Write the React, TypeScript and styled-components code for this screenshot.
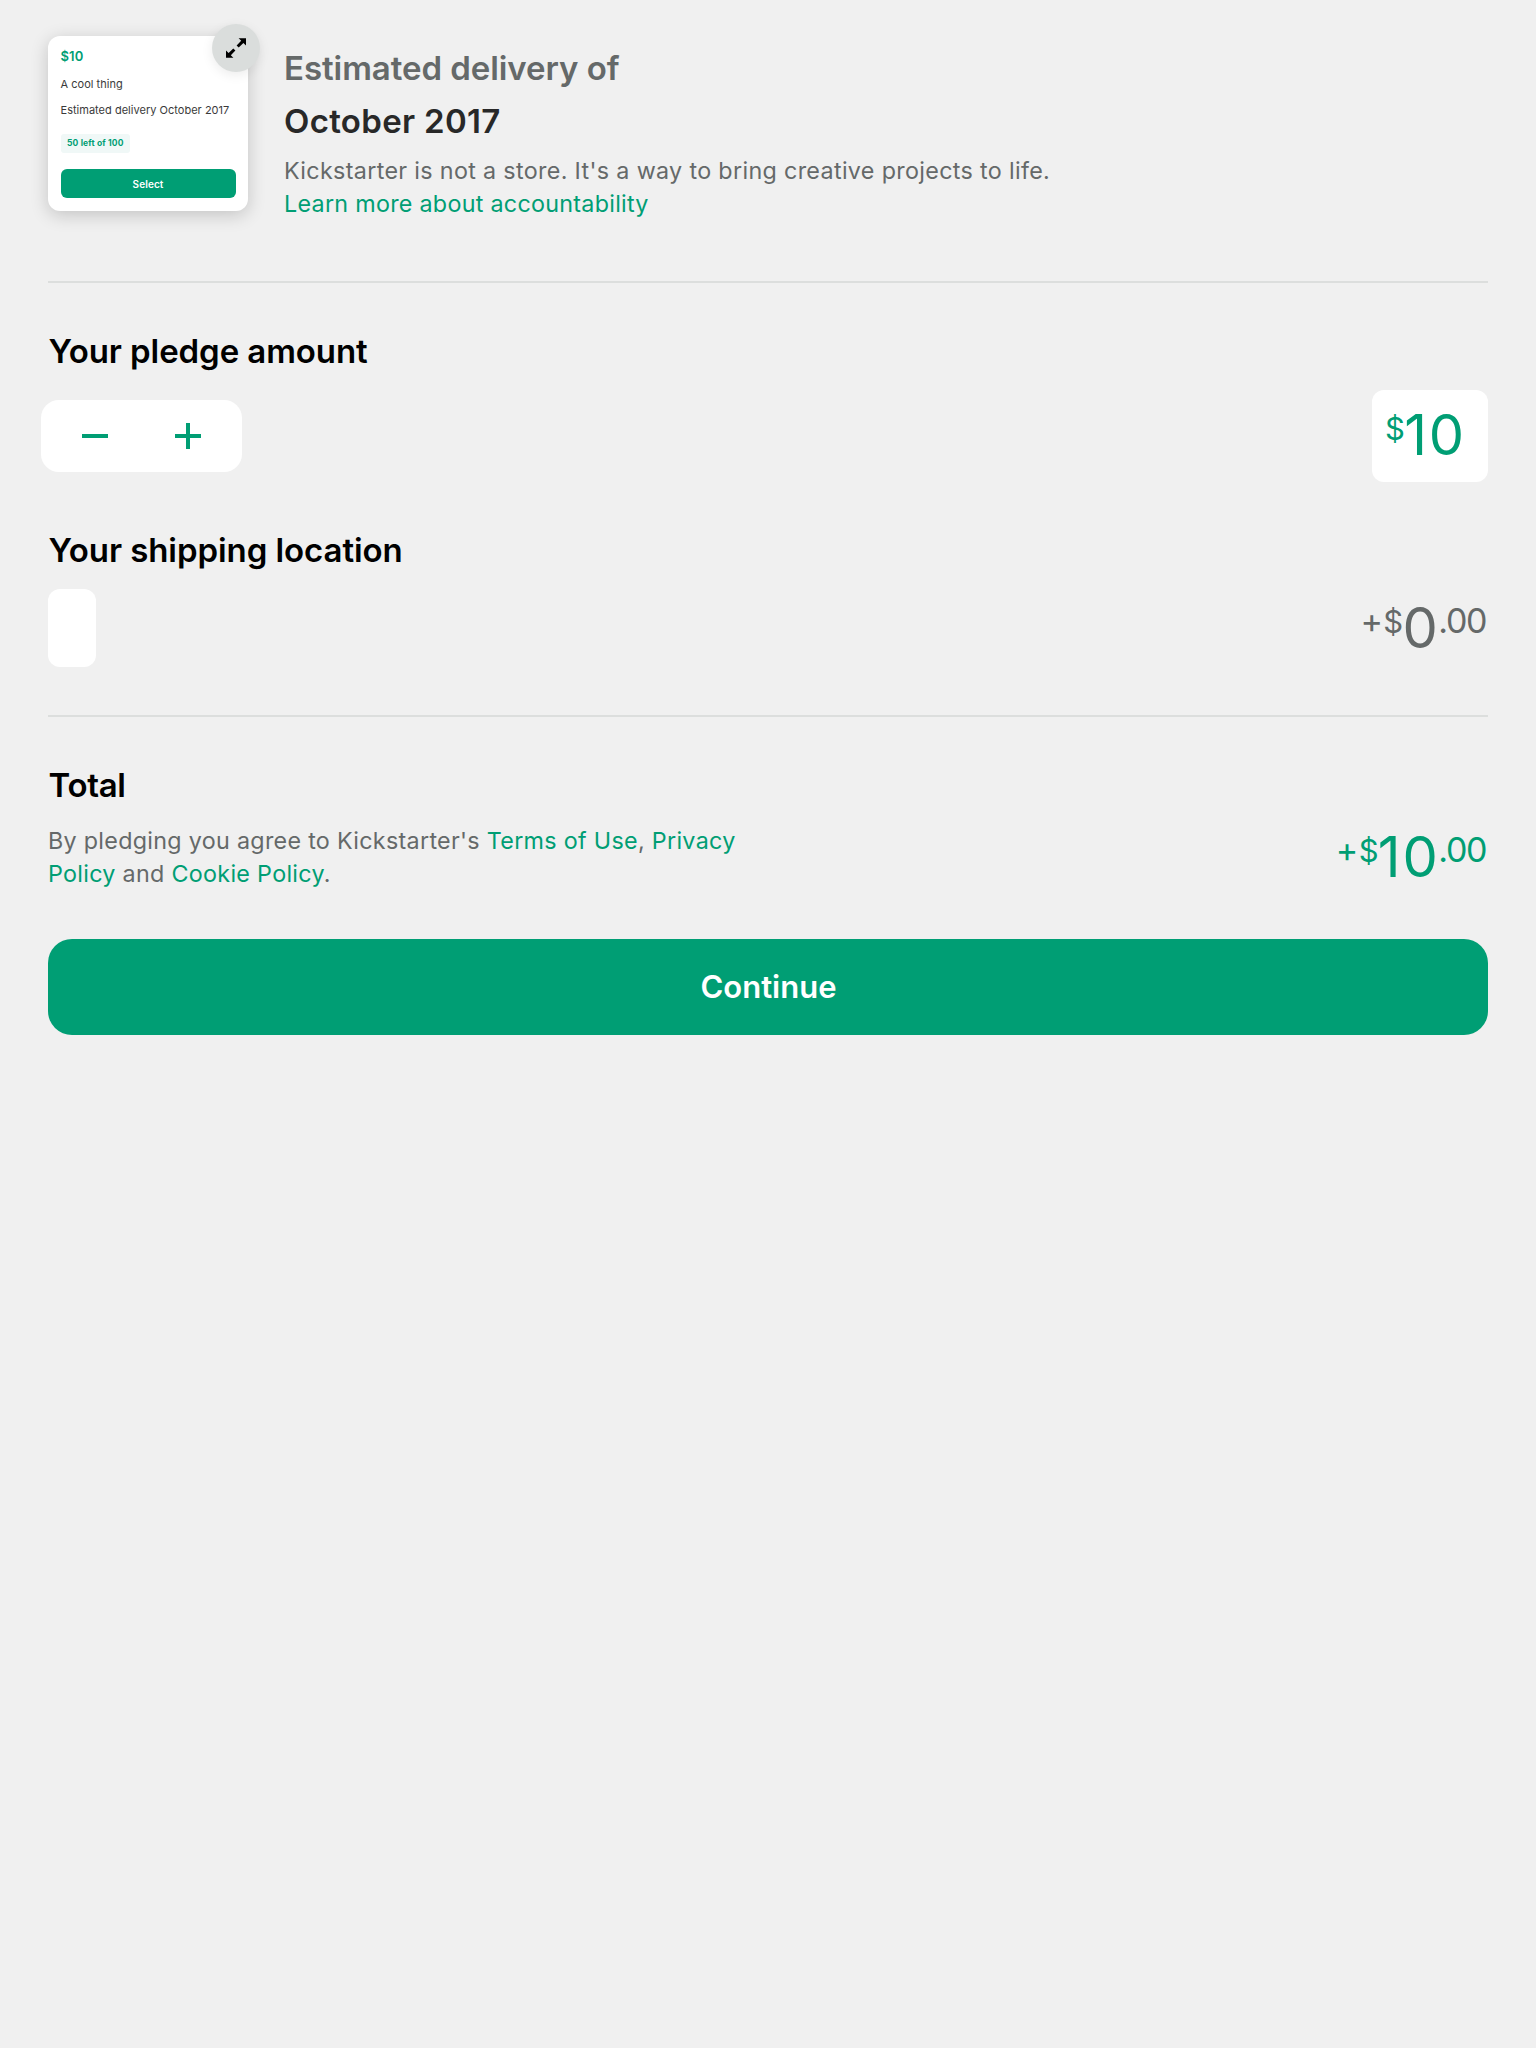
import React from "react";
import styled, { createGlobalStyle } from "styled-components";

const green = "#009e74";
const grey = "#656969";
const soot = "#282828";

const GlobalStyle = createGlobalStyle`
  *, *::before, *::after { box-sizing: border-box; }
  body {
    margin: 0;
    background: #f0f0f0;
    font-family: Inter, "Liberation Sans", sans-serif;
  }
  button { font-family: inherit; border: 0; padding: 0; cursor: pointer; }
`;

const Page = styled.main`
  min-height: 100vh;
  padding: 36px 48px;
  display: flex;
  flex-direction: column;
  background: #f0f0f0;
`;

const Header = styled.header`
  display: flex;
  align-items: flex-start;
  gap: 36px;
  height: 184px;
`;

const RewardCard = styled.article`
  position: relative;
  display: flex;
  flex-direction: column;
  align-items: flex-start;
  width: 200px;
  height: 175px;
  padding: 12px 12.5px 13px;
  border-radius: 12px;
  background: #fff;
  box-shadow: 0 4px 18px rgba(0, 0, 0, 0.19);
  white-space: nowrap;
`;

const RewardPrice = styled.strong`
  font-size: 13px;
  line-height: 16px;
  font-weight: 600;
  letter-spacing: 0.1px;
  color: ${green};
`;

const RewardText = styled.p<{ $gap: number }>`
  margin: ${({ $gap }) => $gap}px 0 0;
  font-size: 11px;
  line-height: 14px;
  letter-spacing: 0.02px;
  color: #3a3a3a;
`;

const RewardBadge = styled.span`
  margin-top: 17px;
  height: 19px;
  padding: 0 6.5px;
  border-radius: 3px;
  background: #f0f8f7;
  color: ${green};
  font-size: 8.5px;
  line-height: 19px;
  font-weight: 700;
  letter-spacing: 0.15px;
`;

const RewardButton = styled.button`
  align-self: stretch;
  height: 29px;
  margin-top: auto;
  border-radius: 6px;
  background: ${green};
  color: #fff;
  font-size: 10px;
  font-weight: 600;
  letter-spacing: 0.1px;
`;

const ExpandButton = styled.button`
  position: absolute;
  top: -12px;
  right: -12px;
  display: grid;
  place-items: center;
  width: 48px;
  height: 48px;
  border-radius: 50%;
  background: #dadddc;
  color: #000;
  box-shadow: 0 3px 12px rgba(0, 0, 0, 0.08);
`;

const Delivery = styled.div`
  padding-top: 6px;
`;

const DeliveryLine = styled.div<{ $color: string; $track: number }>`
  font-size: 33px;
  line-height: 53px;
  font-weight: 600;
  letter-spacing: ${({ $track }) => $track}px;
  color: ${({ $color }) => $color};
`;

const Copy = styled.p<{ $gap: number; $track: number }>`
  margin: ${({ $gap }) => $gap}px 0 0;
  font-size: 23.3px;
  line-height: 33px;
  letter-spacing: ${({ $track }) => $track}px;
  color: ${grey};
  white-space: nowrap;
`;

const Link = styled.a<{ $track?: number }>`
  color: ${green};
  text-decoration: none;
  letter-spacing: ${({ $track }) => ($track === undefined ? "inherit" : `${$track}px`)};
`;

const Divider = styled.hr<{ $gap: number }>`
  width: 100%;
  height: 2px;
  margin: ${({ $gap }) => $gap}px 0 0;
  border: 0;
  background: #dcdedd;
`;

const Section = styled.section`
  padding-top: 47px;
`;

const Title = styled.h2<{ $track: number }>`
  margin: 0;
  padding-left: 0.5px;
  font-size: 33px;
  line-height: 42px;
  font-weight: 600;
  letter-spacing: ${({ $track }) => $track}px;
  color: #000;
`;

const Row = styled.div<{ $height: number }>`
  display: flex;
  align-items: center;
  justify-content: space-between;
  height: ${({ $height }) => $height}px;
  margin-top: 18px;
`;

const Stepper = styled.div`
  display: flex;
  align-items: center;
  width: 201px;
  height: 72px;
  margin-left: -7px;
  padding: 0 8px 0 7px;
  border-radius: 18px;
  background: #fff;
`;

const StepButton = styled.button`
  display: grid;
  place-items: center;
  flex: 1;
  height: 100%;
  background: none;
  color: ${green};
`;

const CountryField = styled.div`
  width: 48px;
  height: 78px;
  border-radius: 12px;
  background: #fff;
`;

const Money = styled.div<{ $color: string }>`
  padding-right: 2px;
  font-size: 56px;
  line-height: 56px;
  letter-spacing: 1.8px;
  white-space: nowrap;
  color: ${({ $color }) => $color};
`;

const Plus = styled.span`
  font-size: 34px;
  line-height: 34px;
  letter-spacing: 0.3px;
  vertical-align: 15px;
`;

const Currency = styled.span`
  margin-right: -0.7px;
  font-size: 31px;
  line-height: 31px;
  letter-spacing: 0;
  vertical-align: 15.5px;
`;

const Cents = styled.span`
  margin-left: -1.2px;
  font-size: 34px;
  line-height: 34px;
  letter-spacing: -1.4px;
  vertical-align: 15px;
`;

const AmountField = styled.div`
  width: 116px;
  height: 92px;
  padding: 17px 0 0 13px;
  border-radius: 12px;
  background: #fff;
`;

const ContinueButton = styled.button`
  height: 96px;
  margin-top: 49px;
  padding-left: 1px;
  border-radius: 24px;
  background: ${green};
  color: #fff;
  font-size: 31px;
  line-height: 38px;
  font-weight: 600;
`;

const ExpandIcon = () => (
  <svg width="20" height="20" viewBox="0 0 20 20" fill="currentColor">
    <path d="M12.6 0.2H20V7.6L17.4 5L12.7 9.5L10.6 7.4L15.2 2.8Z" />
    <path d="M7.4 19.8H0V12.4L2.6 15L7.3 10.5L9.4 12.6L4.8 17.2Z" />
  </svg>
);

const MinusIcon = () => (
  <svg width="28" height="28" viewBox="0 0 28 28" stroke="currentColor" strokeWidth="4">
    <path d="M1 14H27" />
  </svg>
);

const PlusIcon = () => (
  <svg width="28" height="28" viewBox="0 0 28 28" stroke="currentColor" strokeWidth="4">
    <path d="M1 14H27M14 1V27" />
  </svg>
);

export default function App() {
  return (
    <>
      <GlobalStyle />
      <Page>
        <Header>
          <RewardCard>
            <RewardPrice>$10</RewardPrice>
            <RewardText $gap={13}>A cool thing</RewardText>
            <RewardText $gap={12}>Estimated delivery October 2017</RewardText>
            <RewardBadge>50 left of 100</RewardBadge>
            <RewardButton>Select</RewardButton>
            <ExpandButton aria-label="Expand reward">
              <ExpandIcon />
            </ExpandButton>
          </RewardCard>
          <Delivery>
            <DeliveryLine $color={grey} $track={-0.06}>Estimated delivery of</DeliveryLine>
            <DeliveryLine $color={soot} $track={0.32}>October 2017</DeliveryLine>
            <Copy $gap={6} $track={0.335}>
              Kickstarter is not a store. It's a way to bring creative projects to life.
              <br />
              <Link $track={0.28}>Learn more about accountability</Link>
            </Copy>
          </Delivery>
        </Header>

        <Divider $gap={61} />

        <Section>
          <Title $track={-0.08}>Your pledge amount</Title>
          <Row $height={92}>
            <Stepper>
              <StepButton aria-label="Decrease pledge"><MinusIcon /></StepButton>
              <StepButton aria-label="Increase pledge"><PlusIcon /></StepButton>
            </Stepper>
            <AmountField>
              <Money $color={green}><Currency>$</Currency>10</Money>
            </AmountField>
          </Row>
        </Section>

        <Section>
          <Title $track={-0.07}>Your shipping location</Title>
          <Row $height={78}>
            <CountryField />
            <Money $color={grey}><Plus>+</Plus><Currency>$</Currency>0<Cents>.00</Cents></Money>
          </Row>
        </Section>

        <Divider $gap={48} />

        <Section>
          <Title $track={-0.3}>Total</Title>
          <Row $height={66}>
            <Copy $gap={0} $track={0.3}>
              By pledging you agree to Kickstarter's <Link>Terms of Use</Link>, <Link>Privacy<br />Policy</Link> and <Link>Cookie Policy</Link>.
            </Copy>
            <Money $color={green}><Plus>+</Plus><Currency>$</Currency>10<Cents>.00</Cents></Money>
          </Row>
        </Section>

        <ContinueButton>Continue</ContinueButton>
      </Page>
    </>
  );
}
